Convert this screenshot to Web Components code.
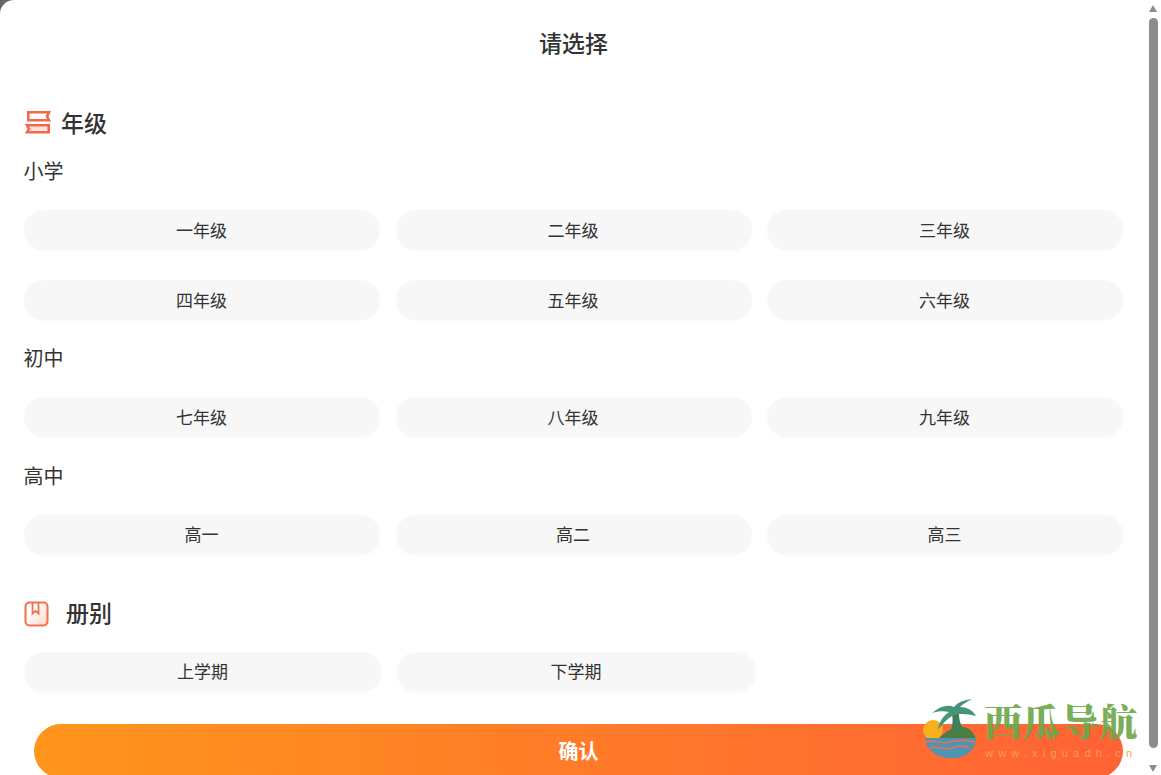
<!DOCTYPE html>
<html lang="zh">
<head>
<meta charset="utf-8">
<title>请选择</title>
<style>
  html, body { margin: 0; height: 100%; overflow: hidden; background: #666; }
  body { font-family: "Noto Sans CJK SC", "Noto Sans", sans-serif; color: #333; }
  .first { margin-bottom: 1.500px; }
  .second { margin-top: 33.200px; margin-bottom: 16px; --title-gap: 15px; --icon-shift: 4px; }
  .last { grid-template-columns: 358px 359px; column-gap: 15px; }
</style>
</head>
<body>

<grade-dialog>
  <section-title class="first">
    <svg slot="icon" width="27" height="26" viewBox="0 0 27 26" fill="none">
      <path d="M5 21.500H25V17H8Z" fill="#ffe3d8"/>
      <path d="M4.300 3.300H25L23 7.300L25 11.300H4.300Z" stroke="#f2694a" stroke-width="2.600"/>
      <path d="M3 16.300H24.700V23.300H3L5 19.800Z" stroke="#f2694a" stroke-width="2.600"/>
    </svg>
    年级
  </section-title>

  <group-label>小学</group-label>
  <pill-row>
    <option-pill>一年级</option-pill><option-pill>二年级</option-pill><option-pill>三年级</option-pill>
    <option-pill>四年级</option-pill><option-pill>五年级</option-pill><option-pill>六年级</option-pill>
  </pill-row>

  <group-label>初中</group-label>
  <pill-row>
    <option-pill>七年级</option-pill><option-pill>八年级</option-pill><option-pill>九年级</option-pill>
  </pill-row>

  <group-label>高中</group-label>
  <pill-row>
    <option-pill>高一</option-pill><option-pill>高二</option-pill><option-pill>高三</option-pill>
  </pill-row>

  <section-title class="second">
    <svg slot="icon" width="27" height="26" viewBox="0 0 27 26" fill="none">
      <defs><linearGradient id="bk" x1="0" y1="0" x2="1" y2="1"><stop offset=".3" stop-color="#fff"/><stop offset="1" stop-color="#ffd5c8"/></linearGradient></defs>
      <rect x="1.500" y="1.500" width="22" height="23" rx="4" fill="url(#bk)" stroke="#f46f4c" stroke-width="2"/>
      <path d="M8.500 2V12.500L11.500 10L14.500 12.500V2" stroke="#f46f4c" stroke-width="1.800"/>
    </svg>
    册别
  </section-title>
  <pill-row class="last">
    <option-pill>上学期</option-pill><option-pill>下学期</option-pill>
  </pill-row>

  <confirm-button>确认</confirm-button>
  <site-badge></site-badge>
</grade-dialog>

<script>
class GradeDialog extends HTMLElement {
  constructor() {
    super();
    this.attachShadow({mode: 'open'}).innerHTML = `
      <style>
        :host { display: flex; height: 775px; width: 1161px; position: relative; overflow: hidden; background: #fff; border-top-left-radius: 14px; }
        .main { width: 1149px; box-sizing: border-box; padding: 0 26px 0 24px; }
        h1 { margin: 0 0 13.500px; height: 84px; line-height: 84px; text-align: center; font-size: 23px; font-weight: 500; color: #333; }
        .bar { width: 12px; position: relative; background: #fff; }
        .bar i { position: absolute; left: 0; top: 18px; bottom: 27px; width: 9px; border-radius: 5px; background: #8c8c8c; }
        .bar b { position: absolute; left: 0; width: 0; height: 0; border-left: 4.500px solid transparent; border-right: 4.500px solid transparent; }
        .bar .up { top: 5px; border-bottom: 7px solid #8c8c8c; }
        .bar .down { bottom: 3px; border-top: 7px solid #8c8c8c; }
      </style>
      <div class="main">
        <h1>请选择</h1>
        <slot></slot>
      </div>
      <div class="bar"><b class="up"></b><i></i><b class="down"></b></div>
    `;
  }
}

class SectionTitle extends HTMLElement {
  constructor() {
    super();
    this.attachShadow({mode: 'open'}).innerHTML = `
      <style>
        :host { display: flex; align-items: center; gap: var(--title-gap, 10px); height: 48px; font-size: 23px; font-weight: 500; color: #333; }
        ::slotted(svg) { flex: none; margin-top: var(--icon-shift, 0); }
      </style>
      <slot name="icon"></slot><slot></slot>
    `;
  }
}

class GroupLabel extends HTMLElement {
  constructor() {
    super();
    this.attachShadow({mode: 'open'}).innerHTML = `
      <style>
        :host { display: block; height: 48px; margin-bottom: 15px; margin-left: -0.500px; line-height: 48px; font-size: 20px; color: #333; }
      </style>
      <slot></slot>
    `;
  }
}

class PillRow extends HTMLElement {
  constructor() {
    super();
    this.attachShadow({mode: 'open'}).innerHTML = `
      <style>
        :host { display: grid; grid-template-columns: repeat(3, 356px); column-gap: 15.500px; row-gap: 30px; margin-bottom: 14.400px; }
      </style>
      <slot></slot>
    `;
  }
}

class OptionPill extends HTMLElement {
  constructor() {
    super();
    this.attachShadow({mode: 'open'}).innerHTML = `
      <style>
        :host { display: flex; align-items: center; justify-content: center; box-sizing: border-box; height: 40px; padding-bottom: 2px; padding-right: 1px; border-radius: 20px; background: #f7f7f7; box-shadow: 0 1px 4px rgba(0,0,0,.02); font-size: 17px; color: #333; }
      </style>
      <slot></slot>
    `;
  }
}

class ConfirmButton extends HTMLElement {
  constructor() {
    super();
    this.attachShadow({mode: 'open'}).innerHTML = `
      <style>
        :host { position: absolute; left: 34px; top: 724px; box-sizing: border-box; width: 1089px; height: 54px; padding-bottom: 2px; border-radius: 27px; display: flex; align-items: center; justify-content: center; background: linear-gradient(90deg, #ff951c, #ff6236); color: #fff; font-size: 20px; font-weight: 700; }
      </style>
      <slot></slot>
    `;
  }
}

class SiteBadge extends HTMLElement {
  constructor() {
    super();
    this.attachShadow({mode: 'open'}).innerHTML = `
      <style>
        :host { position: absolute; left: 922px; top: 696px; width: 224px; height: 70px; pointer-events: none; }
        svg { position: absolute; left: 0; top: 0; }
        .name { position: absolute; left: 62px; top: 0; font-family: "Noto Serif CJK SC", "Noto Sans CJK SC", serif; font-size: 38px; line-height: 48px; font-weight: 900; letter-spacing: .4px; color: #6fa84a; opacity: .92; white-space: nowrap; }
        .url { position: absolute; left: 63px; top: 50px; font: 11px/14px "Liberation Sans", sans-serif; letter-spacing: 5.200px; color: #ff9a5c; white-space: nowrap; }
      </style>
      <svg width="62" height="70" viewBox="0 0 62 70">
        <circle cx="11" cy="34" r="10" fill="#f6b01d"/>
        <path d="M16 44C22 35 32 31 42 31C48 32 53 38 54 44Z" fill="#4e7d42"/>
        <path d="M30 18L37 17C37 23 38 28 42 34L28 36C31 30 31 24 30 18Z" fill="#3f7f5a"/>
        <path d="M50 3C42 4 36 6 32 11C26 8 18 10 10 17C16 15 22 15 27 16C21 20 17 26 16 34C20 28 26 22 32 19C38 17 47 18 54 20C51 14 44 11 38 11C41 8 46 5 50 3Z" fill="#46957a"/>
        <path d="M3 42H54C54 54 44 62 30 62C15 62 4 54 3 42Z" fill="#4a94b4"/>
        <path d="M4 46C12 43 19 49 28 46S44 44 53 46M8 52C15 49 22 55 30 52S42 50 49 52" fill="none" stroke="#d87560" stroke-width="1.800"/>
      </svg>
      <span class="name">西瓜导航</span>
      <span class="url">www.xiguadh.cn</span>
    `;
  }
}

customElements.define('grade-dialog', GradeDialog);
customElements.define('section-title', SectionTitle);
customElements.define('group-label', GroupLabel);
customElements.define('pill-row', PillRow);
customElements.define('option-pill', OptionPill);
customElements.define('confirm-button', ConfirmButton);
customElements.define('site-badge', SiteBadge);
</script>
</body>
</html>
